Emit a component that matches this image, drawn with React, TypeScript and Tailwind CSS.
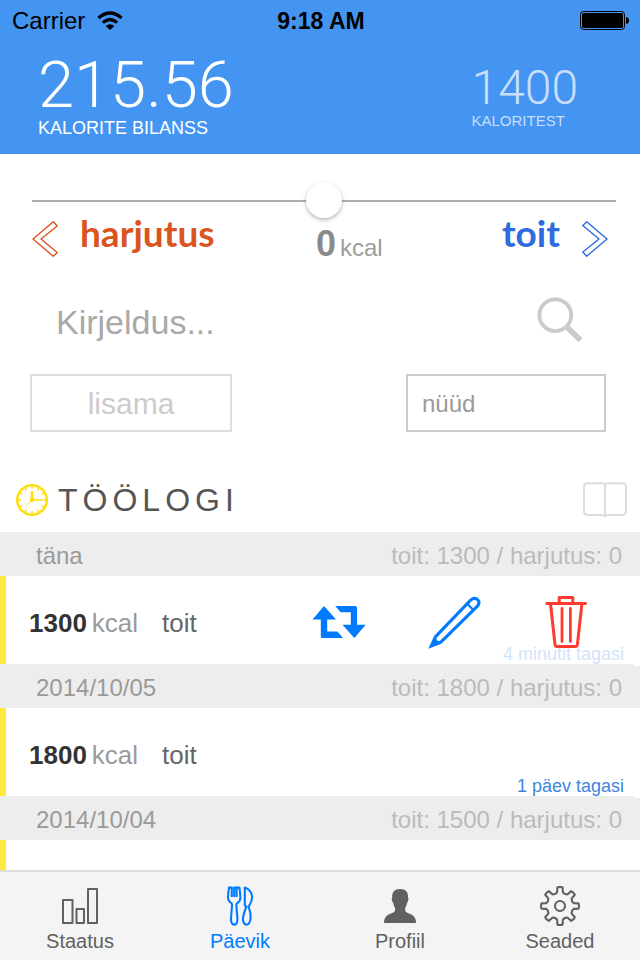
import { useState, type ReactNode } from "react";

function WifiIcon() {
  return (
    <svg width="26" height="20" viewBox="0 0 26 20" fill="none" stroke="black" strokeWidth="3.2" aria-hidden="true">
      <path d="M1.5 7 Q13 -3 24.5 7" />
      <path d="M5.8 11.6 Q13 5.4 20.2 11.6" />
      <path d="M13 19 L8.6 14.9 Q13 11.4 17.4 14.9 Z" fill="black" stroke="none" />
    </svg>
  );
}

function BatteryIcon() {
  return (
    <svg width="50" height="20" viewBox="0 0 50 20" aria-hidden="true">
      <rect x="0.5" y="0.5" width="44" height="18" rx="3" fill="none" stroke="black" />
      <rect x="2" y="2" width="41" height="15" rx="1.5" />
      <path d="M46 6 Q49 6.5 49 9.5 Q49 12.5 46 13 Z" />
    </svg>
  );
}

function ArrowIcon({ flipped = false }: { flipped?: boolean }) {
  return (
    <svg
      width="26"
      height="36"
      viewBox="0 0 26 36"
      fill="none"
      stroke="currentColor"
      strokeWidth="1.4"
      strokeLinejoin="round"
      className={flipped ? "rotate-180" : ""}
      aria-hidden="true"
    >
      <path d="M1 18 L21.3 0.8 L25.2 5 L9 18 L25.2 31.5 L21.3 35.3 Z" />
    </svg>
  );
}

function SearchIcon() {
  return (
    <svg width="46" height="46" viewBox="0 0 46 46" fill="none" stroke="currentColor" aria-hidden="true">
      <circle cx="18.3" cy="18.2" r="15.9" strokeWidth="3.8" />
      <path d="M29 29 L43.5 43.3" strokeWidth="5.6" />
    </svg>
  );
}

const hours = [0, 1, 2, 3, 4, 5, 6, 7, 8, 9, 10, 11];

function ClockIcon() {
  return (
    <svg width="34" height="34" viewBox="0 0 34 34" fill="none" stroke="#ffdd0a" aria-hidden="true">
      <circle cx="17" cy="17" r="14.8" strokeWidth="2.4" />
      {hours.map((h) => (
        <path key={h} d="M17 3 V5.8" strokeWidth="1.5" transform={`rotate(${h * 30} 17 17)`} />
      ))}
      <path d="M17 9.5 V17" strokeWidth="2.8" strokeLinecap="round" />
      <path d="M17 17 H27.5" strokeWidth="1.6" />
      <path d="M17 17 L10.5 23.5" strokeWidth="0.9" />
      <circle cx="17" cy="17" r="2.2" fill="#ffdd0a" stroke="none" />
    </svg>
  );
}

function BookIcon() {
  return (
    <svg width="44" height="36" viewBox="0 0 44 36" fill="none" stroke="#dcdcdc" strokeWidth="2" aria-hidden="true">
      <path d="M22 2.5 Q21 1.3 19 1.3 H5 Q1 1.3 1 5.3 V29 Q1 33 5 33 H19 Q21 33 22 34 Q23 33 25 33 H39 Q43 33 43 29 V5.3 Q43 1.3 39 1.3 H25 Q23 1.3 22 2.5 V35" />
    </svg>
  );
}

function RepeatIcon() {
  return (
    <svg width="54" height="34" viewBox="0 0 54 34" fill="currentColor" aria-hidden="true">
      <path d="M12 1 L0.5 14.5 H8.8 V31.5 Q8.8 33 10.4 33 H31 L25.4 26.6 H15.2 V14.5 H24 Z" />
      <path d="M23.2 1 H43.2 Q45 1 45 2.7 V19.7 H53.8 L42.3 33 L30.5 19.7 H38.8 V7.2 H28.6 Z" />
    </svg>
  );
}

function PencilIcon() {
  return (
    <svg width="53" height="53" viewBox="0 0 53 53" fill="none" stroke="currentColor" strokeWidth="3.1" aria-hidden="true">
      <path d="M7.6 40.6 L42.6 4.2 Q46.4 0.8 49.6 3.6 Q52.4 6.8 49.2 10.4 L12.6 46.3" />
      <path d="M39.2 7.8 L45.4 14" strokeWidth="2.2" />
      <path d="M6.3 39.4 L0.3 52.7 L13.4 47.8 L12.4 44.8 Q7.6 45.8 8.8 41 Z" fill="currentColor" stroke="none" />
    </svg>
  );
}

function TrashIcon() {
  return (
    <svg
      width="42"
      height="52"
      viewBox="0 0 42 52"
      fill="none"
      stroke="currentColor"
      strokeWidth="3"
      strokeLinecap="round"
      strokeLinejoin="round"
      aria-hidden="true"
    >
      <path d="M1.8 7.6 H40.4" />
      <path d="M14.2 7 V1.6 H27.8 V7" />
      <path d="M5.6 8.5 L10 48.5 Q10.4 50.5 12 50.5 H30.4 Q32 50.5 32.4 48.5 L36.8 8.5" />
      <path d="M17 12.5 V45.5 M25.4 12.5 V45.5" strokeWidth="2.8" />
    </svg>
  );
}

function BarsIcon() {
  return (
    <svg width="40" height="40" viewBox="0 0 40 40" fill="none" stroke="currentColor" strokeWidth="2" strokeLinejoin="round" aria-hidden="true">
      <rect x="3" y="14" width="9.5" height="23" />
      <rect x="16.5" y="23" width="7.5" height="14" />
      <rect x="28" y="3" width="9" height="34" />
    </svg>
  );
}

function CutleryIcon() {
  return (
    <svg width="40" height="40" viewBox="0 0 40 40" fill="none" stroke="currentColor" strokeWidth="2.1" strokeLinejoin="round" strokeLinecap="round" aria-hidden="true">
      <path d="M9 1.6 Q8 8 8 12 Q8.3 15.4 11.4 17.2 Q12.2 18 12 20 L11 32 Q10.8 38.6 14.2 38.6 Q17.6 38.6 17.4 32 L16.4 20 Q16.2 18 17 17.2 Q20.2 15.4 20.4 12 Q20.4 8 19.4 1.6 L16.6 1.6 V10.2 M14.2 1.6 V10.2 M11.8 1.6 V10.2 M9 1.6 H11.8 M14.2 1.6 H16.6" />
      <path d="M24.8 1.6 Q31.6 4 32.2 11 Q32 16 28.6 20.6 Q31 27 30.6 32 Q30 38.6 26.4 38.6 Q22.6 38 23 32 Q23.6 28 26.4 20.4 L24.8 19.6 Z" />
    </svg>
  );
}

function PersonIcon() {
  return (
    <svg width="40" height="40" viewBox="0 0 40 40" fill="currentColor" aria-hidden="true">
      <path d="M20 3 C25.8 3 28.4 6.2 28 11.4 Q29 12.4 28.2 14.6 Q27.8 16.4 27 17 Q26.6 20 25.2 21.8 V24.6 Q25.6 26.6 29.6 27.8 Q36 29.8 36 37 H4 Q4 29.8 10.4 27.8 Q14.6 26.6 15 24.6 V21.8 Q13.6 20 13.2 17 Q12.4 16.4 12 14.6 Q11.2 12.4 12.2 11.4 C11.8 6.2 14.6 3 20 3 Z" />
    </svg>
  );
}

function gearPath() {
  const at = (r: number, deg: number) => {
    const a = (deg * Math.PI) / 180;
    return `${(20 + r * Math.sin(a)).toFixed(2)} ${(20 - r * Math.cos(a)).toFixed(2)}`;
  };
  let d = "";
  for (let i = 0; i < 8; i++) {
    const c = i * 45;
    d += `${i === 0 ? "M" : "L"}${at(14, c - 12)} L${at(18.6, c - 8)} Q${at(19.6, c)} ${at(18.6, c + 8)} L${at(14, c + 12)} Q${at(12.2, c + 22.5)} ${at(14, c + 33)} `;
  }
  return d + "Z";
}

function GearIcon() {
  return (
    <svg width="40" height="40" viewBox="0 0 40 40" fill="none" stroke="currentColor" strokeWidth="2.1" strokeLinejoin="round" aria-hidden="true">
      <path d={gearPath()} />
      <circle cx="20" cy="20" r="5" />
    </svg>
  );
}

type Entry = { kcal: number; kind: string; ago: string; swiped?: boolean };
type Day = { label: string; food: number; exercise: number; entries: Entry[] };

const days: Day[] = [
  { label: "täna", food: 1300, exercise: 0, entries: [{ kcal: 1300, kind: "toit", ago: "4 minutit tagasi", swiped: true }] },
  { label: "2014/10/05", food: 1800, exercise: 0, entries: [{ kcal: 1800, kind: "toit", ago: "1 päev tagasi" }] },
  { label: "2014/10/04", food: 1500, exercise: 0, entries: [] },
];

function EntryRow({ entry }: { entry: Entry }) {
  return (
    <li className="relative flex h-22 items-center border-l-6 border-[#ffeb3b] pl-[23px] pr-[53px] text-[26px] leading-8">
      <span className="pt-1.5 font-bold text-[#333333]">{entry.kcal}</span>
      <span className="ml-[5px] pt-1.5 text-[#9a9a9a]">kcal</span>
      <span className="ml-6 pt-1.5 text-[#666666]">{entry.kind}</span>
      <span className={entry.swiped ? "absolute bottom-0 right-4 text-[18px] leading-5 text-[#d3e3f9]" : "absolute bottom-0 right-4 text-[18px] leading-5 text-[#3f85dd]"}>
        {entry.ago}
      </span>
      {entry.swiped && (
        <div className="relative ml-auto flex items-center gap-16 pt-1 text-[#007aff]">
          <button type="button" aria-label="Korda" className="-mr-0.5">
            <RepeatIcon />
          </button>
          <button type="button" aria-label="Muuda">
            <PencilIcon />
          </button>
          <button type="button" aria-label="Kustuta" className="text-[#ff3b30]">
            <TrashIcon />
          </button>
        </div>
      )}
    </li>
  );
}

function DaySection({ day, first }: { day: Day; first: boolean }) {
  return (
    <section className="shrink-0">
      <header className="relative flex h-11 items-center justify-between bg-[#ededed] pl-9 pr-[18px] pt-1 text-2xl">
        <h3 className="text-[#9a9a9a]">{day.label}</h3>
        <p className="text-[#bbbbbb]">
          toit: {day.food} / harjutus: {day.exercise}
        </p>
        {!first && <span className="absolute right-0 top-0 h-0.5 w-1.5 bg-white" />}
      </header>
      <ul>
        {day.entries.map((e) => (
          <EntryRow key={e.ago} entry={e} />
        ))}
      </ul>
    </section>
  );
}

function Tab({ label, icon, active = false }: { label: string; icon: ReactNode; active?: boolean }) {
  return (
    <a
      href="#"
      aria-current={active ? "page" : undefined}
      className={active ? "flex flex-col items-center pt-3.5 text-[#007aff]" : "flex flex-col items-center pt-3.5 text-[#616161]"}
    >
      {icon}
      <span className="mt-[3px] text-[20px] leading-6">{label}</span>
    </a>
  );
}

export default function App() {
  const [amount, setAmount] = useState(0);
  const [description, setDescription] = useState("");
  const [when, setWhen] = useState("nüüd");

  return (
    <div className="flex h-screen flex-col overflow-hidden bg-white font-['Liberation_Sans',Arial,sans-serif]">
      <header className="h-[154px] shrink-0 bg-[#4495f1]">
        <div className="grid h-10 grid-cols-3 items-center pl-3 pr-2.5 text-black">
          <div className="flex items-center gap-3 pt-0.5 text-2xl">
            <span>Carrier</span>
            <WifiIcon />
          </div>
          <span className="pt-0.5 text-center text-[23px] font-bold">9:18 AM</span>
          <div className="flex justify-end pt-0.5">
            <BatteryIcon />
          </div>
        </div>
        <div className="flex justify-between pl-[38px] pr-[62px] pt-[13px] text-white">
          <div>
            <p className="font-['Roboto',sans-serif] text-[65px] font-light leading-[65px]">215.56</p>
            <p className="text-[18px] leading-5">KALORITE BILANSS</p>
          </div>
          <div className="pt-3 text-[#c8dffb]">
            <p className="font-['Roboto',sans-serif] text-5xl font-light leading-[46px]">1400</p>
            <p className="text-[15px] leading-5">KALORITEST</p>
          </div>
        </div>
      </header>

      <main className="flex min-h-0 flex-1 flex-col overflow-hidden">
        <div className="pl-8 pr-6 pt-7">
          <input
            type="range"
            aria-label="Kalorid"
            min={-1000}
            max={1000}
            value={amount}
            onChange={(e) => setAmount(Number(e.target.value))}
            className="block h-[38px] w-full appearance-none bg-transparent [&::-webkit-slider-runnable-track]:h-0.5 [&::-webkit-slider-runnable-track]:bg-[#adadad] [&::-webkit-slider-thumb]:-mt-[18px] [&::-webkit-slider-thumb]:size-9 [&::-webkit-slider-thumb]:appearance-none [&::-webkit-slider-thumb]:rounded-full [&::-webkit-slider-thumb]:bg-white [&::-webkit-slider-thumb]:shadow-[0_2px_4px_rgba(0,0,0,0.28)]"
          />
          <div className="-mt-1.5 grid h-[50px] grid-cols-[1fr_auto_1fr]">
            <button type="button" className="flex items-center gap-[22px] font-['Lato',sans-serif] text-[37px] font-bold leading-10 text-[#d9541e]">
              <ArrowIcon />
              <span className="-mt-3">harjutus</span>
            </button>
            <output className="self-end pl-1 text-4xl font-bold leading-10 text-[#8a8a8a]">{amount}</output>
            <div className="flex items-center justify-between pl-1 pr-2">
              <span className="self-end text-2xl leading-8 text-[#9c9c9c]">kcal</span>
              <button type="button" className="flex items-center gap-[22px] font-['Lato',sans-serif] text-[37px] font-bold leading-10 text-[#2e6be0]">
                <span className="-mt-3">toit</span>
                <ArrowIcon flipped />
              </button>
            </div>
          </div>
        </div>

        <form className="shrink-0" onSubmit={(e) => e.preventDefault()}>
          <div className="flex items-center pl-14 pr-[57px] pt-8">
            <input
              type="text"
              aria-label="Kirjeldus"
              placeholder="Kirjeldus..."
              value={description}
              onChange={(e) => setDescription(e.target.value)}
              className="h-12 min-w-0 flex-1 bg-transparent pt-1 text-[34px] outline-none placeholder:text-[#a9a9a9]"
            />
            <button type="button" aria-label="Otsi" className="text-[#cbcbcb]">
              <SearchIcon />
            </button>
          </div>
          <div className="flex justify-between pl-[30px] pr-[34px] pt-[30px]">
            <button type="submit" className="h-[58px] w-[202px] border-2 border-[#dddddd] text-[30px] text-[#cccccc]">
              lisama
            </button>
            <input
              type="text"
              aria-label="Aeg"
              value={when}
              onChange={(e) => setWhen(e.target.value)}
              className="h-[58px] w-[200px] border-2 border-[#cccccc] px-3.5 pt-0.5 text-2xl text-[#9a9a9a] outline-none"
            />
          </div>
        </form>

        <div className="flex shrink-0 items-center justify-between pb-3.5 pl-[15px] pr-[13px] pt-[50px]">
          <h2 className="flex items-center gap-[9px] text-[32px] leading-9 tracking-[5px] text-[#555555]">
            <ClockIcon />
            TÖÖLOGI
          </h2>
          <button type="button" aria-label="Päevaraamat">
            <BookIcon />
          </button>
        </div>

        <div className="flex min-h-0 flex-1 flex-col overflow-hidden">
          {days.map((d, i) => (
            <DaySection key={d.label} day={d} first={i === 0} />
          ))}
          <div className="min-h-0 flex-1 border-l-6 border-[#ffeb3b]" />
        </div>
      </main>

      <nav className="grid h-[90px] shrink-0 grid-cols-4 border-t-2 border-[#dedede] bg-[#f4f4f4]">
        <Tab label="Staatus" icon={<BarsIcon />} />
        <Tab label="Päevik" icon={<CutleryIcon />} active />
        <Tab label="Profiil" icon={<PersonIcon />} />
        <Tab label="Seaded" icon={<GearIcon />} />
      </nav>
    </div>
  );
}
